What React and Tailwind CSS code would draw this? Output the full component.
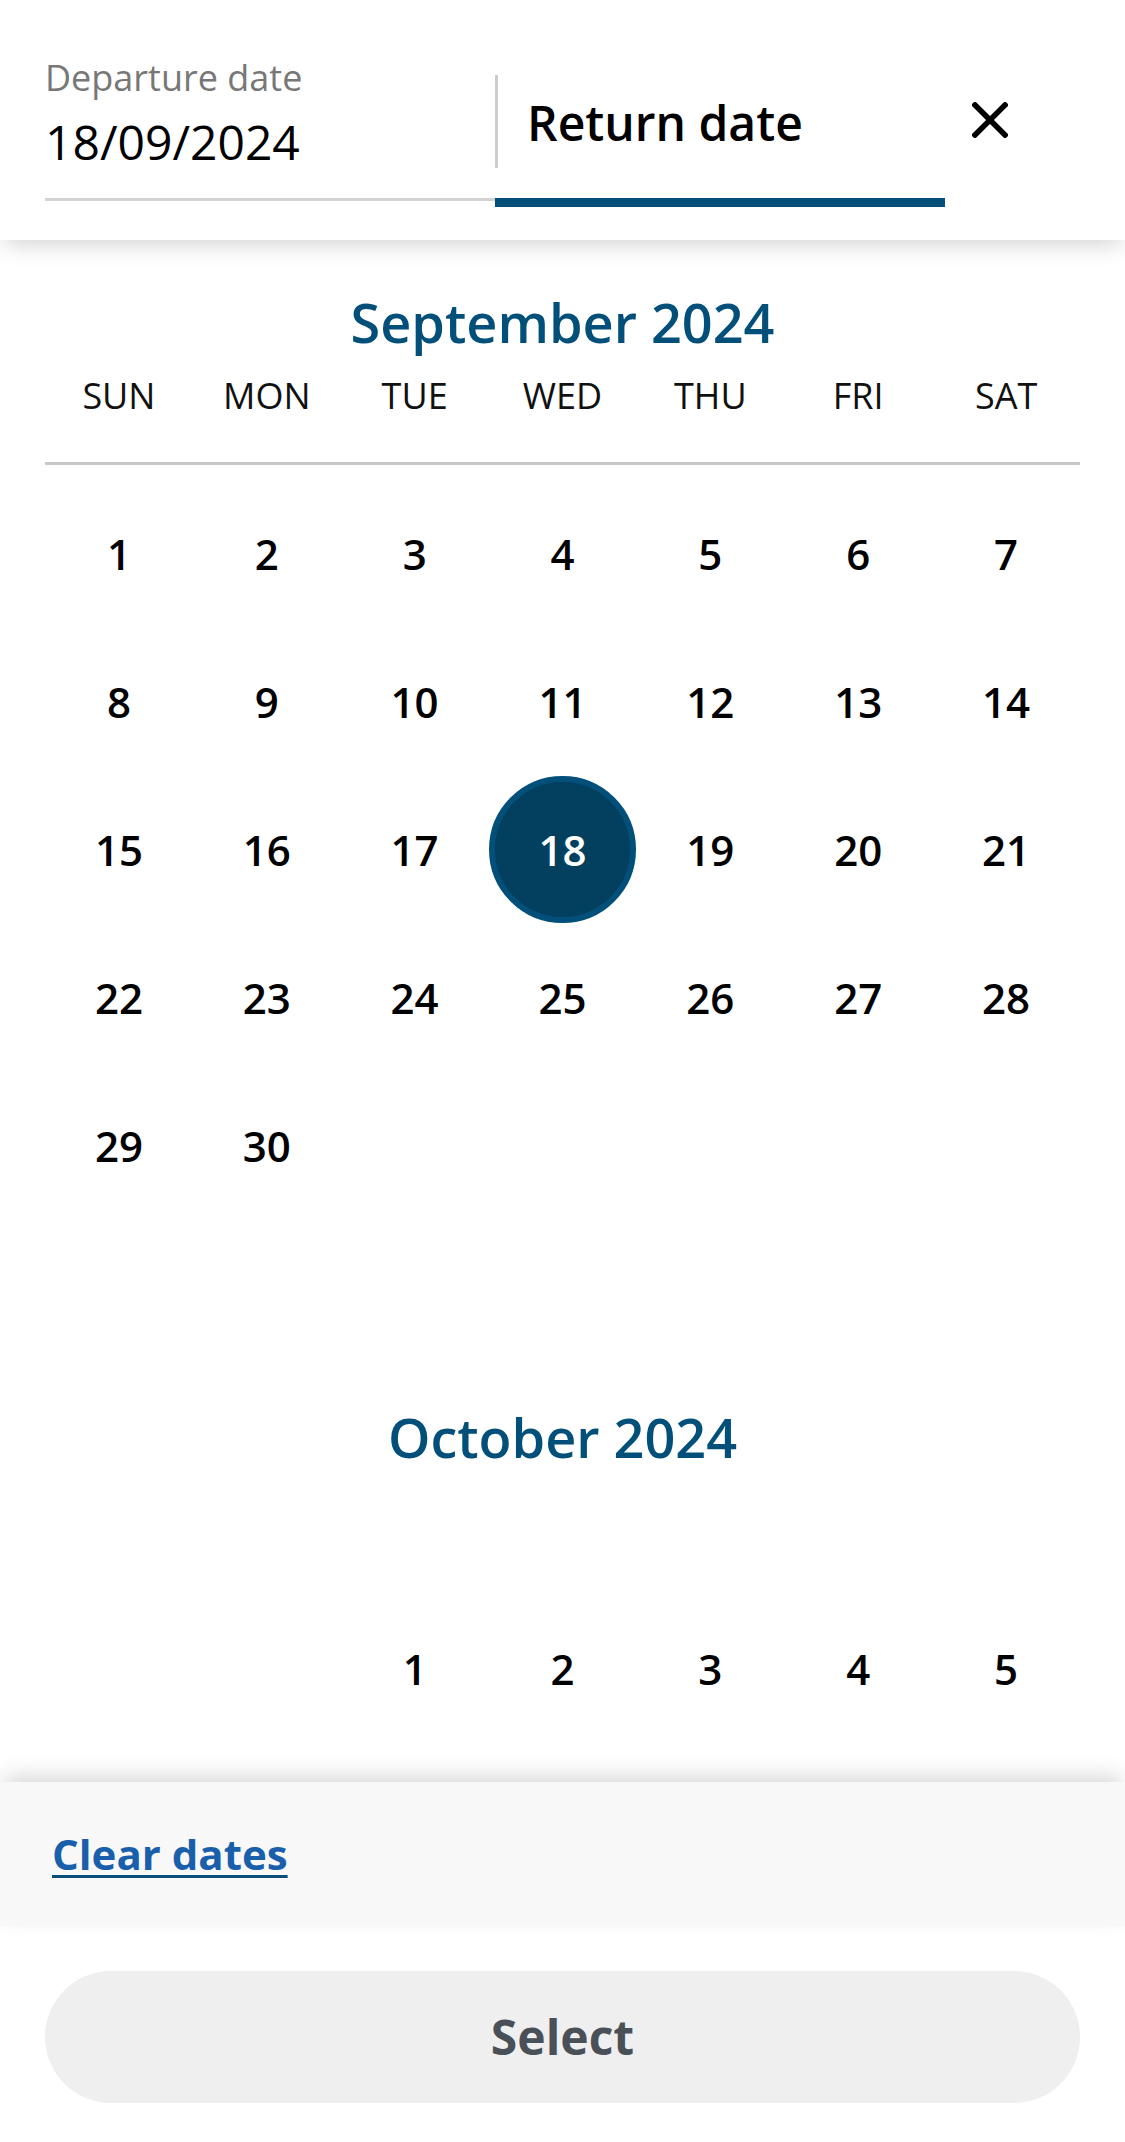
import React from 'react';

const WEEKDAYS = ['SUN', 'MON', 'TUE', 'WED', 'THU', 'FRI', 'SAT'];

// leading blanks + days shown per month (October is scrolled, only its first week is in view)
const MONTHS = [
  { title: 'September 2024', offset: 0, days: 30 },
  { title: 'October 2024', offset: 2, days: 5 },
];

const SELECTED = { month: 'September 2024', day: 18 };

const CloseIcon = () => (
  <svg viewBox="0 0 36 36" className="w-[36px] h-[36px]" fill="none" stroke="#000" strokeWidth="5.5" strokeLinecap="square">
    <path d="M3 3 L33 33 M33 3 L3 33" />
  </svg>
);

const MonthGrid = ({ month, showWeekdays }) => {
  const cells = [];
  for (let i = 0; i < month.offset; i++) cells.push(null);
  for (let d = 1; d <= month.days; d++) cells.push(d);

  return (
    <section>
      <h2 className="text-center text-[54px] leading-[72px] font-semibold text-[#02507a]">
        {month.title}
      </h2>
      {showWeekdays ? (
        <div className="mt-[14px] grid grid-cols-7 pb-[42px] border-b-[3px] border-[#c8c8c8]">
          {WEEKDAYS.map((w) => (
            <div key={w} className="text-center text-[36px] leading-[48px] text-[#111]">
              {w}
            </div>
          ))}
        </div>
      ) : (
        <div className="h-[107px]" />
      )}
      <div className="mt-[14px] grid grid-cols-7">
        {cells.map((d, i) => {
          const isSel = d === SELECTED.day && month.title === SELECTED.month;
          return (
            <div key={i} className="h-[148px] flex items-center justify-center">
              {d && (
                isSel ? (
                  <span className="w-[147px] h-[147px] rounded-full bg-[#033f5e] border-[6px] border-[#02507a] flex items-center justify-center text-white text-[42px] font-semibold">
                    {d}
                  </span>
                ) : (
                  <span className="text-[42px] font-semibold text-black">{d}</span>
                )
              )}
            </div>
          );
        })}
      </div>
    </section>
  );
};

export default function App() {
  return (
    <div
      className="h-[2142px] w-full flex flex-col bg-white overflow-hidden"
      style={{ fontFamily: '"Open Sans", "Noto Sans", sans-serif' }}
    >
      {/* date fields */}
      <header className="relative z-10 h-[240px] shrink-0 bg-white px-[45px] pt-[54px] shadow-[0_8px_22px_-4px_rgba(0,0,0,0.18)]">
        <div className="flex items-start">
          <div className="w-[450px] h-[147px] border-b-[3px] border-[#d3d3d3]">
            <div className="text-[36px] leading-[48px] text-[#777]">Departure date</div>
            <div className="mt-[10px] text-[48px] leading-[60px] text-black">18/09/2024</div>
          </div>
          <div className="w-[450px] h-[153px] border-b-[9px] border-[#02507a] flex items-start">
            <div className="mt-[21px] w-[3px] h-[93px] bg-[#cccccc]" />
            <div className="ml-[29px] mt-[39px] text-[48px] leading-[60px] font-semibold text-black">
              Return date
            </div>
          </div>
          <button className="ml-[27px] mt-[48px]" aria-label="Close">
            <CloseIcon />
          </button>
        </div>
      </header>

      {/* months */}
      <main className="flex-1 overflow-hidden px-[45px] pt-[46px]">
        <MonthGrid month={MONTHS[0]} showWeekdays />
        <div className="h-[182px]" />
        <MonthGrid month={MONTHS[1]} showWeekdays={false} />
      </main>

      {/* footer */}
      <div className="relative z-10 shrink-0 h-[144px] bg-[#f8f8f8] px-[52px] flex items-center shadow-[0_-8px_22px_-4px_rgba(0,0,0,0.18)]">
        <a
          href="#"
          className="text-[42px] leading-[56px] font-bold text-[#1a5fab] underline decoration-[#0a4f7a] decoration-[3px] underline-offset-[5px]"
        >
          Clear dates
        </a>
      </div>
      <div className="shrink-0 bg-white px-[45px] pt-[45px] pb-[39px]">
        <button className="w-full h-[132px] rounded-full bg-[#efefef] text-[48px] font-bold text-[#4a5058]">
          Select
        </button>
      </div>
    </div>
  );
}
